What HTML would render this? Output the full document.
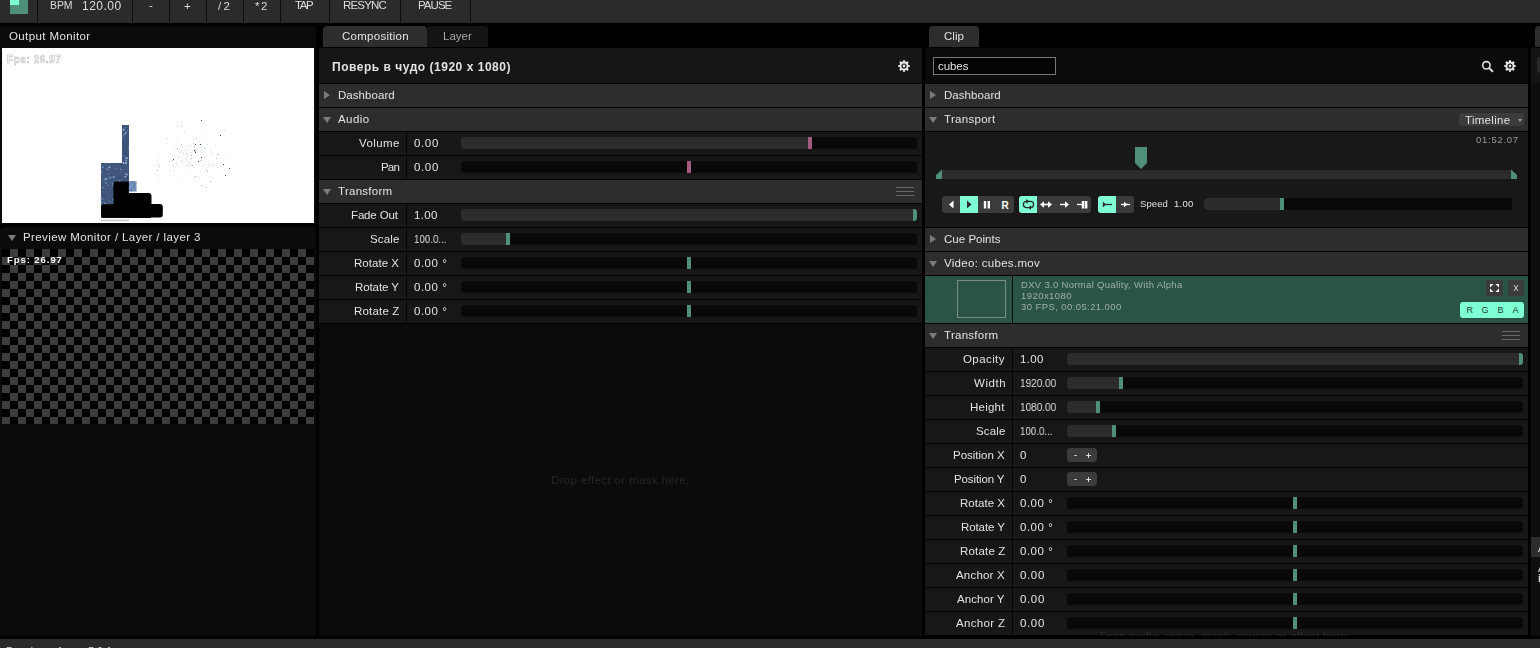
<!DOCTYPE html>
<html><head><meta charset="utf-8">
<style>
*{margin:0;padding:0;box-sizing:border-box}
html,body{width:1540px;height:648px;overflow:hidden;background:#000;font-family:"Liberation Sans",sans-serif;color:#e2e2e2;font-size:11px}
.a{position:absolute}
.t{position:absolute;white-space:nowrap;line-height:1;will-change:transform}
</style></head><body>
<div class="a" style="left:0px;top:0px;width:1540px;height:23px;background:#2b2b2b;"></div>
<div class="a" style="left:10px;top:0px;width:18px;height:14px;background:#4f8f77;"></div>
<div class="a" style="left:10px;top:0px;width:9px;height:5px;background:#7fffd4;"></div>
<div class="a" style="left:37px;top:0px;width:1px;height:23px;background:#0f0f0f;"></div>
<div class="a" style="left:132px;top:0px;width:1px;height:23px;background:#0f0f0f;"></div>
<div class="a" style="left:169px;top:0px;width:1px;height:23px;background:#0f0f0f;"></div>
<div class="a" style="left:206px;top:0px;width:1px;height:23px;background:#0f0f0f;"></div>
<div class="a" style="left:243px;top:0px;width:1px;height:23px;background:#0f0f0f;"></div>
<div class="a" style="left:280px;top:0px;width:1px;height:23px;background:#0f0f0f;"></div>
<div class="a" style="left:329px;top:0px;width:1px;height:23px;background:#0f0f0f;"></div>
<div class="a" style="left:400px;top:0px;width:1px;height:23px;background:#0f0f0f;"></div>
<div class="a" style="left:470px;top:0px;width:1px;height:23px;background:#0f0f0f;"></div>
<div class="a" style="left:0px;top:26px;width:316px;height:197px;background:#0b0b0b;border-radius:4px 4px 0 0"></div>
<div class="a" style="left:2px;top:48px;width:312px;height:175px;background:#fff;"></div>
<svg class="a" style="left:0;top:0" width="320" height="230"><rect x="122" y="125" width="7" height="93" fill="#3f5478"/><rect x="101" y="163" width="28" height="55" fill="#41577c"/><rect x="129" y="181" width="7.5" height="10.5" fill="#6f8db5"/><circle cx="124.3" cy="133.4" r="0.5" fill="#8fb0d8"/><circle cx="127.7" cy="130.3" r="0.5" fill="#7d9ccc"/><circle cx="123.5" cy="129.8" r="1.0" fill="#8fb0d8"/><circle cx="123.7" cy="155.9" r="0.5" fill="#7d9ccc"/><circle cx="122.9" cy="137.5" r="0.5" fill="#7d9ccc"/><circle cx="126.1" cy="127.8" r="0.6" fill="#8fb0d8"/><circle cx="125.9" cy="132.5" r="1.0" fill="#6f8fba"/><circle cx="125.8" cy="157.0" r="0.6" fill="#8fb0d8"/><circle cx="126.1" cy="160.8" r="0.8" fill="#8fb0d8"/><circle cx="125.8" cy="128.5" r="0.5" fill="#7d9ccc"/><circle cx="123.4" cy="163.1" r="1.0" fill="#a9c3e6"/><circle cx="125.3" cy="176.7" r="0.8" fill="#a9c3e6"/><circle cx="123.7" cy="135.1" r="0.6" fill="#8fb0d8"/><circle cx="126.0" cy="154.4" r="0.8" fill="#2f4166"/><circle cx="125.1" cy="159.1" r="0.5" fill="#8fb0d8"/><circle cx="125.6" cy="134.2" r="0.8" fill="#6f8fba"/><circle cx="128.5" cy="148.6" r="0.5" fill="#7d9ccc"/><circle cx="126.0" cy="174.0" r="0.8" fill="#a9c3e6"/><circle cx="126.9" cy="158.3" r="1.0" fill="#8fb0d8"/><circle cx="127.9" cy="177.9" r="1.0" fill="#2f4166"/><circle cx="126.6" cy="128.4" r="0.8" fill="#2f4166"/><circle cx="126.0" cy="163.1" r="1.0" fill="#a9c3e6"/><circle cx="127.0" cy="174.7" r="0.8" fill="#8fb0d8"/><circle cx="128.6" cy="144.9" r="0.5" fill="#5b77a3"/><circle cx="122.4" cy="168.0" r="0.6" fill="#2f4166"/><circle cx="106.2" cy="179.0" r="1.0" fill="#8fb0d8"/><circle cx="104.5" cy="179.5" r="0.8" fill="#6f8fba"/><circle cx="118.2" cy="198.4" r="0.8" fill="#2f4166"/><circle cx="109.7" cy="177.7" r="1.0" fill="#6f8fba"/><circle cx="104.2" cy="170.2" r="0.6" fill="#2f4166"/><circle cx="105.9" cy="182.9" r="0.6" fill="#a9c3e6"/><circle cx="106.9" cy="169.0" r="0.8" fill="#7d9ccc"/><circle cx="112.9" cy="202.1" r="0.5" fill="#5b77a3"/><circle cx="119.9" cy="195.0" r="1.0" fill="#5b77a3"/><circle cx="109.4" cy="167.2" r="1.0" fill="#8fb0d8"/><circle cx="105.0" cy="203.4" r="1.0" fill="#6f8fba"/><circle cx="103.3" cy="187.6" r="0.5" fill="#8fb0d8"/><circle cx="112.9" cy="185.0" r="0.8" fill="#7d9ccc"/><circle cx="101.5" cy="198.8" r="1.0" fill="#6f8fba"/><circle cx="114.3" cy="202.2" r="0.8" fill="#5b77a3"/><circle cx="103.6" cy="197.8" r="1.0" fill="#5b77a3"/><circle cx="111.2" cy="166.5" r="0.5" fill="#2f4166"/><circle cx="108.2" cy="173.9" r="0.6" fill="#7d9ccc"/><circle cx="101.5" cy="202.0" r="0.8" fill="#6f8fba"/><circle cx="115.5" cy="200.5" r="0.8" fill="#2f4166"/><circle cx="119.1" cy="191.5" r="0.8" fill="#7d9ccc"/><circle cx="108.7" cy="169.8" r="0.6" fill="#7d9ccc"/><circle cx="112.4" cy="183.6" r="0.6" fill="#7d9ccc"/><circle cx="118.0" cy="203.4" r="0.6" fill="#6f8fba"/><circle cx="118.2" cy="193.3" r="0.6" fill="#6f8fba"/><circle cx="111.9" cy="177.6" r="0.5" fill="#8fb0d8"/><circle cx="117.6" cy="182.4" r="0.6" fill="#2f4166"/><circle cx="113.7" cy="177.1" r="0.8" fill="#a9c3e6"/><circle cx="102.7" cy="167.2" r="1.0" fill="#6f8fba"/><circle cx="108.1" cy="182.8" r="0.5" fill="#5b77a3"/><circle cx="120.1" cy="177.1" r="0.5" fill="#2f4166"/><circle cx="103.5" cy="178.9" r="0.6" fill="#5b77a3"/><circle cx="119.7" cy="180.8" r="0.8" fill="#8fb0d8"/><circle cx="117.8" cy="202.8" r="1.0" fill="#5b77a3"/><circle cx="109.4" cy="201.8" r="0.6" fill="#6f8fba"/><circle cx="121.9" cy="164.1" r="1.0" fill="#2f4166"/><circle cx="104.1" cy="196.9" r="1.0" fill="#2f4166"/><circle cx="120.7" cy="169.4" r="0.6" fill="#8fb0d8"/><circle cx="101.3" cy="202.8" r="0.5" fill="#7d9ccc"/><circle cx="116.7" cy="168.7" r="0.6" fill="#6f8fba"/><circle cx="101.6" cy="171.7" r="0.6" fill="#7d9ccc"/><circle cx="107.8" cy="185.3" r="0.6" fill="#8fb0d8"/><circle cx="120.1" cy="177.5" r="1.0" fill="#2f4166"/><circle cx="113.3" cy="200.1" r="1.0" fill="#7d9ccc"/><circle cx="103.7" cy="169.2" r="0.5" fill="#5b77a3"/><circle cx="134.4" cy="187.1" r="0.6" fill="#6f8fba"/><circle cx="130.0" cy="187.2" r="0.5" fill="#7d9ccc"/><circle cx="129.4" cy="187.8" r="1.0" fill="#8fb0d8"/><circle cx="135.2" cy="181.6" r="0.6" fill="#a9c3e6"/><circle cx="129.3" cy="182.0" r="1.0" fill="#7d9ccc"/><circle cx="129.2" cy="189.9" r="0.5" fill="#5b77a3"/><circle cx="131.3" cy="190.7" r="0.6" fill="#2f4166"/><circle cx="130.9" cy="186.1" r="1.0" fill="#7d9ccc"/><circle cx="135.6" cy="188.0" r="0.8" fill="#7d9ccc"/><circle cx="135.2" cy="183.0" r="1.0" fill="#6f8fba"/><path d="M116.5,181.5 H128.8 V193 H148.5 Q151.5,193 151.5,196 V204 H160 Q162.8,204 162.8,207 V214.5 Q162.8,217.5 160,217.5 H151 V218 H104 Q101,218 101,215 V207.5 Q101,204.3 104,204.3 H113.4 V184.5 Q113.4,181.5 116.5,181.5 Z" fill="#000"/><rect x="101" y="219.5" width="28" height="1.8" fill="#c8ccd4"/></svg>
<svg class="a" style="left:0;top:0" width="320" height="230"><g><rect x="201" y="120" width="1" height="1" fill="#3a4a6a"/><rect x="195" y="144" width="1" height="1" fill="#3a4a6a"/><rect x="200" y="144" width="1" height="1" fill="#3a4a6a"/><rect x="223" y="164" width="1" height="1" fill="#3a4a6a"/><rect x="229" y="168" width="1" height="1" fill="#3a4a6a"/><rect x="225" y="175" width="1" height="1" fill="#3a4a6a"/><rect x="198" y="161" width="1" height="1" fill="#3a4a6a"/><rect x="220" y="135" width="1" height="1" fill="#3a4a6a"/><rect x="194" y="150" width="1" height="1" fill="#3a4a6a"/><rect x="195" y="152" width="1" height="1" fill="#3a4a6a"/><rect x="201" y="157" width="1" height="1" fill="#3a4a6a"/><rect x="173" y="159" width="1" height="1" fill="#3a4a6a"/><rect x="169" y="161" width="1" height="1" fill="#a0b8d8"/><rect x="158" y="164" width="1" height="1" fill="#f0e0c8"/><rect x="200" y="171" width="1" height="1" fill="#b0e8f0"/><rect x="194" y="151" width="1" height="1" fill="#b8c8e8"/><rect x="206" y="169" width="1" height="1" fill="#c8d8f0"/><rect x="177" y="149" width="1" height="1" fill="#a0b8d8"/><rect x="177" y="142" width="1" height="1" fill="#c8f0e0"/><rect x="167" y="139" width="1" height="1" fill="#e0c8f0"/><rect x="202" y="160" width="1" height="1" fill="#f0e0c8"/><rect x="166" y="143" width="1" height="1" fill="#d0f0f8"/><rect x="159" y="166" width="1" height="1" fill="#9ab0cc"/><rect x="193" y="167" width="1" height="1" fill="#c8d8f0"/><rect x="181" y="144" width="1" height="1" fill="#b8c8e8"/><rect x="173" y="166" width="1" height="1" fill="#e0c8f0"/><rect x="187" y="146" width="1" height="1" fill="#f0e0c8"/><rect x="187" y="156" width="1" height="1" fill="#b0e8f0"/><rect x="193" y="143" width="1" height="1" fill="#b8c8e8"/><rect x="157" y="178" width="1" height="1" fill="#c8d8f0"/><rect x="201" y="185" width="1" height="1" fill="#c8d8f0"/><rect x="186" y="160" width="1" height="1" fill="#f0e0c8"/><rect x="194" y="146" width="1" height="1" fill="#e0c8f0"/><rect x="190" y="159" width="1" height="1" fill="#f0d0e0"/><rect x="192" y="150" width="1" height="1" fill="#f0e0c8"/><rect x="191" y="155" width="1" height="1" fill="#a0b8d8"/><rect x="195" y="149" width="1" height="1" fill="#9ab0cc"/><rect x="200" y="171" width="1" height="1" fill="#c8f0e0"/><rect x="176" y="163" width="1" height="1" fill="#f0d0e0"/><rect x="181" y="161" width="1" height="1" fill="#b8c8e8"/><rect x="224" y="130" width="1" height="1" fill="#b0e8f0"/><rect x="179" y="182" width="1" height="1" fill="#f0e0c8"/><rect x="173" y="146" width="1" height="1" fill="#c8d8f0"/><rect x="204" y="156" width="1" height="1" fill="#b8c8e8"/><rect x="216" y="158" width="1" height="1" fill="#b8c8e8"/><rect x="186" y="160" width="1" height="1" fill="#f0e0c8"/><rect x="180" y="152" width="1" height="1" fill="#b0e8f0"/><rect x="174" y="170" width="1" height="1" fill="#c8f0e0"/><rect x="212" y="153" width="1" height="1" fill="#b0e8f0"/><rect x="203" y="166" width="1" height="1" fill="#c8f0e0"/><rect x="187" y="165" width="1" height="1" fill="#b0e8f0"/><rect x="192" y="165" width="1" height="1" fill="#9ab0cc"/><rect x="206" y="187" width="1" height="1" fill="#a0b8d8"/><rect x="177" y="148" width="1" height="1" fill="#e0c8f0"/><rect x="208" y="166" width="1" height="1" fill="#b8c8e8"/><rect x="194" y="177" width="1" height="1" fill="#b8c8e8"/><rect x="157" y="170" width="1" height="1" fill="#a0b8d8"/><rect x="188" y="164" width="1" height="1" fill="#e0c8f0"/><rect x="206" y="167" width="1" height="1" fill="#b0e8f0"/><rect x="181" y="150" width="1" height="1" fill="#f0e0c8"/><rect x="191" y="152" width="1" height="1" fill="#f0d0e0"/><rect x="186" y="158" width="1" height="1" fill="#c8f0e0"/><rect x="187" y="172" width="1" height="1" fill="#c8f0e0"/><rect x="200" y="160" width="1" height="1" fill="#a0b8d8"/><rect x="218" y="154" width="1" height="1" fill="#9ab0cc"/><rect x="183" y="153" width="1" height="1" fill="#c8d8f0"/><rect x="210" y="150" width="1" height="1" fill="#d0f0f8"/><rect x="177" y="125" width="1" height="1" fill="#c8d8f0"/><rect x="186" y="154" width="1" height="1" fill="#e0c8f0"/><rect x="190" y="145" width="1" height="1" fill="#e0c8f0"/><rect x="212" y="164" width="1" height="1" fill="#c8d8f0"/><rect x="215" y="144" width="1" height="1" fill="#c8f0e0"/><rect x="202" y="129" width="1" height="1" fill="#d0f0f8"/><rect x="209" y="164" width="1" height="1" fill="#e0c8f0"/><rect x="204" y="147" width="1" height="1" fill="#c8d8f0"/><rect x="207" y="144" width="1" height="1" fill="#b0e8f0"/><rect x="182" y="146" width="1" height="1" fill="#c8d8f0"/><rect x="186" y="153" width="1" height="1" fill="#e0c8f0"/><rect x="229" y="155" width="1" height="1" fill="#d0f0f8"/><rect x="169" y="170" width="1" height="1" fill="#b0e8f0"/><rect x="172" y="160" width="1" height="1" fill="#9ab0cc"/><rect x="217" y="167" width="1" height="1" fill="#c8d8f0"/><rect x="189" y="162" width="1" height="1" fill="#c8d8f0"/><rect x="195" y="176" width="1" height="1" fill="#a0b8d8"/><rect x="196" y="138" width="1" height="1" fill="#a0b8d8"/><rect x="191" y="158" width="1" height="1" fill="#b8c8e8"/><rect x="207" y="171" width="1" height="1" fill="#9ab0cc"/><rect x="210" y="181" width="1" height="1" fill="#a0b8d8"/><rect x="178" y="157" width="1" height="1" fill="#f0d0e0"/><rect x="185" y="149" width="1" height="1" fill="#f0d0e0"/><rect x="201" y="136" width="1" height="1" fill="#f0e0c8"/><rect x="204" y="148" width="1" height="1" fill="#b0e8f0"/><rect x="202" y="152" width="1" height="1" fill="#c8f0e0"/><rect x="157" y="157" width="1" height="1" fill="#c8d8f0"/><rect x="181" y="126" width="1" height="1" fill="#b8c8e8"/><rect x="195" y="151" width="1" height="1" fill="#a0b8d8"/><rect x="190" y="165" width="1" height="1" fill="#f0d0e0"/><rect x="175" y="167" width="1" height="1" fill="#d0f0f8"/><rect x="184" y="132" width="1" height="1" fill="#b0e8f0"/><rect x="185" y="158" width="1" height="1" fill="#c8d8f0"/></g></svg>
<div class="t" style="left:7px;top:55px;font-size:10px;font-weight:bold;color:#fff;-webkit-text-stroke:0.5px #b4b4b4;letter-spacing:0.55px">Fps: 26.97</div>

<div class="a" style="left:0px;top:227px;width:316px;height:409px;background:#0b0b0b;border-radius:4px 4px 0 0"></div>
<div class="a" style="left:8px;top:235px;width:0;height:0;border-left:4px solid transparent;border-right:4px solid transparent;border-top:6px solid #7c7c7c"></div>
<div class="a" style="left:2px;top:249px;width:312px;height:175px;background-color:#000;background-image:linear-gradient(45deg,#3c3c3c 25%,transparent 25%,transparent 75%,#3c3c3c 75%),linear-gradient(45deg,#3c3c3c 25%,transparent 25%,transparent 75%,#3c3c3c 75%);background-size:16px 16px;background-position:0 0,8px 8px"></div>
<div class="a" style="left:323px;top:26px;width:104px;height:21px;background:#2d2d2d;border-radius:4px 4px 0 0"></div>
<div class="a" style="left:427px;top:26px;width:61px;height:21px;background:#141414;border-radius:4px 4px 0 0"></div>
<div class="a" style="left:319px;top:48px;width:603px;height:588px;background:#0b0b0b;"></div>
<div class="a" style="left:319px;top:48px;width:603px;height:35px;background:#171615;"></div>
<div class="a" style="left:319px;top:83px;width:603px;height:241px;background:#030303;"></div>
<svg class="a" style="left:0;top:0" width="1540" height="648" viewBox="0 0 1540 648"><polygon points="902.72,61.79 903.41,60.03 904.59,60.03 905.28,61.79 906.07,62.12 907.81,61.36 908.64,62.19 907.88,63.93 908.21,64.72 909.97,65.41 909.97,66.59 908.21,67.28 907.88,68.07 908.64,69.81 907.81,70.64 906.07,69.88 905.28,70.21 904.59,71.97 903.41,71.97 902.72,70.21 901.93,69.88 900.19,70.64 899.36,69.81 900.12,68.07 899.79,67.28 898.03,66.59 898.03,65.41 899.79,64.72 900.12,63.93 899.36,62.19 900.19,61.36 901.93,62.12" fill="#e6e6e6"/><circle cx="904.0" cy="66.0" r="2" fill="none" stroke="#171615" stroke-width="1.2"/></svg>
<div class="a" style="left:319px;top:84px;width:603px;height:23px;background:#2d2d2d;"></div>
<div class="a" style="left:324px;top:91px;width:0;height:0;border-top:4px solid transparent;border-bottom:4px solid transparent;border-left:6px solid #7c7c7c"></div>
<div class="a" style="left:319px;top:108px;width:603px;height:23px;background:#2d2d2d;"></div>
<div class="a" style="left:323px;top:117px;width:0;height:0;border-left:4px solid transparent;border-right:4px solid transparent;border-top:6px solid #7c7c7c"></div>
<div class="a" style="left:319px;top:132px;width:603px;height:23px;background:#181715;"></div>
<div class="a" style="left:406px;top:132px;width:1px;height:23px;background:#050505;"></div>
<div class="a" style="left:461px;top:137px;width:456px;height:12px;background:#090909;border-radius:3px;overflow:hidden"><div class="a" style="left:0;top:0;width:347px;height:12px;background:#2c2c2c"></div><div class="a" style="left:347px;top:0;width:4px;height:12px;background:#a35b80"></div></div>
<div class="a" style="left:319px;top:156px;width:603px;height:23px;background:#181715;"></div>
<div class="a" style="left:406px;top:156px;width:1px;height:23px;background:#050505;"></div>
<div class="a" style="left:461px;top:161px;width:456px;height:12px;background:#090909;border-radius:3px;overflow:hidden"><div class="a" style="left:226px;top:0;width:4px;height:12px;background:#a35b80"></div></div>
<div class="a" style="left:319px;top:180px;width:603px;height:23px;background:#2d2d2d;"></div>
<div class="a" style="left:323px;top:189px;width:0;height:0;border-left:4px solid transparent;border-right:4px solid transparent;border-top:6px solid #7c7c7c"></div>
<div class="a" style="left:896px;top:187px;width:18px;height:1px;background:#6a6a6a;"></div>
<div class="a" style="left:896px;top:191px;width:18px;height:1px;background:#6a6a6a;"></div>
<div class="a" style="left:896px;top:195px;width:18px;height:1px;background:#6a6a6a;"></div>
<div class="a" style="left:319px;top:204px;width:603px;height:23px;background:#181715;"></div>
<div class="a" style="left:406px;top:204px;width:1px;height:23px;background:#050505;"></div>
<div class="a" style="left:461px;top:209px;width:456px;height:12px;background:#090909;border-radius:3px;overflow:hidden"><div class="a" style="left:0;top:0;width:452px;height:12px;background:#2c2c2c"></div><div class="a" style="left:452px;top:0;width:4px;height:12px;background:#4f8f77"></div></div>
<div class="a" style="left:319px;top:228px;width:603px;height:23px;background:#181715;"></div>
<div class="a" style="left:406px;top:228px;width:1px;height:23px;background:#050505;"></div>
<div class="a" style="left:461px;top:233px;width:456px;height:12px;background:#090909;border-radius:3px;overflow:hidden"><div class="a" style="left:0;top:0;width:45px;height:12px;background:#2c2c2c"></div><div class="a" style="left:45px;top:0;width:4px;height:12px;background:#4f8f77"></div></div>
<div class="a" style="left:319px;top:252px;width:603px;height:23px;background:#181715;"></div>
<div class="a" style="left:406px;top:252px;width:1px;height:23px;background:#050505;"></div>
<div class="a" style="left:461px;top:257px;width:456px;height:12px;background:#090909;border-radius:3px;overflow:hidden"><div class="a" style="left:226px;top:0;width:4px;height:12px;background:#4f8f77"></div></div>
<div class="a" style="left:319px;top:276px;width:603px;height:23px;background:#181715;"></div>
<div class="a" style="left:406px;top:276px;width:1px;height:23px;background:#050505;"></div>
<div class="a" style="left:461px;top:281px;width:456px;height:12px;background:#090909;border-radius:3px;overflow:hidden"><div class="a" style="left:226px;top:0;width:4px;height:12px;background:#4f8f77"></div></div>
<div class="a" style="left:319px;top:300px;width:603px;height:23px;background:#181715;"></div>
<div class="a" style="left:406px;top:300px;width:1px;height:23px;background:#050505;"></div>
<div class="a" style="left:461px;top:305px;width:456px;height:12px;background:#090909;border-radius:3px;overflow:hidden"><div class="a" style="left:226px;top:0;width:4px;height:12px;background:#4f8f77"></div></div>
<div class="a" style="left:929px;top:26px;width:50px;height:21px;background:#2d2d2d;border-radius:4px 4px 0 0"></div>
<div class="a" style="left:925px;top:48px;width:603px;height:588px;background:#0b0b0b;"></div>
<div class="a" style="left:925px;top:48px;width:603px;height:35px;background:#0b0b0b;"></div>
<div class="a" style="left:925px;top:83px;width:603px;height:553px;background:#030303;"></div>
<div class="a" style="left:933px;top:57px;width:123px;height:18px;background:#050505;border:1px solid #777"></div>
<svg class="a" style="left:0;top:0" width="1540" height="648"><circle cx="1486.4" cy="65.3" r="3.7" fill="none" stroke="#dcdcdc" stroke-width="1.6"/><line x1="1489.2" y1="68.1" x2="1492.4" y2="71.3" stroke="#dcdcdc" stroke-width="2" stroke-linecap="round"/></svg>
<svg class="a" style="left:0;top:0" width="1540" height="648" viewBox="0 0 1540 648"><polygon points="1508.72,61.79 1509.41,60.03 1510.59,60.03 1511.28,61.79 1512.07,62.12 1513.81,61.36 1514.64,62.19 1513.88,63.93 1514.21,64.72 1515.97,65.41 1515.97,66.59 1514.21,67.28 1513.88,68.07 1514.64,69.81 1513.81,70.64 1512.07,69.88 1511.28,70.21 1510.59,71.97 1509.41,71.97 1508.72,70.21 1507.93,69.88 1506.19,70.64 1505.36,69.81 1506.12,68.07 1505.79,67.28 1504.03,66.59 1504.03,65.41 1505.79,64.72 1506.12,63.93 1505.36,62.19 1506.19,61.36 1507.93,62.12" fill="#e6e6e6"/><circle cx="1510.0" cy="66.0" r="2" fill="none" stroke="#0b0b0b" stroke-width="1.2"/></svg>
<div class="a" style="left:925px;top:84px;width:603px;height:23px;background:#2d2d2d;"></div>
<div class="a" style="left:930px;top:91px;width:0;height:0;border-top:4px solid transparent;border-bottom:4px solid transparent;border-left:6px solid #7c7c7c"></div>
<div class="a" style="left:925px;top:108px;width:603px;height:23px;background:#2d2d2d;"></div>
<div class="a" style="left:929px;top:117px;width:0;height:0;border-left:4px solid transparent;border-right:4px solid transparent;border-top:6px solid #7c7c7c"></div>
<div class="a" style="left:1459px;top:113px;width:65px;height:13px;background:#3c3c3c;border-radius:3px"></div>
<div class="a" style="left:1518px;top:119px;width:0;height:0;border-left:2px solid transparent;border-right:2px solid transparent;border-top:3px solid #999"></div>
<div class="a" style="left:925px;top:132px;width:603px;height:95px;background:#181818;"></div>
<svg class="a" style="left:0;top:0" width="1540" height="648">
<rect x="942" y="170" width="569" height="9" fill="#2c2c2c"/>
<polygon points="936,179 936,175 942,169.5 942,179" fill="#4f8f77"/>
<polygon points="1511,169.5 1517,175 1517,179 1511,179" fill="#4f8f77"/>
<polygon points="1135,147 1147,147 1147,163 1141,169 1135,163" fill="#4f8f77"/>
<rect x="942" y="196" width="72" height="17" rx="3" fill="#3b3b3b"/>
<rect x="960" y="196" width="18" height="17" fill="#7fffd4"/>
<polygon points="953.5,200.5 953.5,208.5 949,204.5" fill="#fff"/>
<polygon points="967,200.5 967,208.5 971.5,204.5" fill="#2a2a2a"/>
<rect x="983.8" y="201" width="2.4" height="7.5" fill="#fff"/>
<rect x="987.6" y="201" width="2.4" height="7.5" fill="#fff"/>
<text x="1001.6" y="208.5" font-family="Liberation Sans" font-weight="bold" font-size="10" fill="#fff">R</text>
<rect x="1019" y="196" width="72" height="17" rx="3" fill="#3b3b3b"/>
<path d="M1022,196 H1037 V213 H1022 A3,3 0 0 1 1019,210 V199 A3,3 0 0 1 1022,196 Z" fill="#7fffd4"/>
<rect x="1023.4" y="201.4" width="10.2" height="6.2" rx="3.1" fill="none" stroke="#2a2a2a" stroke-width="1.25"/>
<polygon points="1026.2,199 1029.2,201.4 1026.2,203.8" fill="#2a2a2a"/>
<polygon points="1031,205.2 1028.2,207.6 1031,210" fill="#2a2a2a"/>
<line x1="1042" y1="204.5" x2="1050" y2="204.5" stroke="#fff" stroke-width="1.6"/>
<polygon points="1040,204.5 1044,201.2 1044,207.8" fill="#fff"/>
<polygon points="1052,204.5 1048,201.2 1048,207.8" fill="#fff"/>
<line x1="1060" y1="204.5" x2="1066" y2="204.5" stroke="#fff" stroke-width="1.4"/>
<polygon points="1069,204.5 1065,201.2 1065,207.8" fill="#fff"/>
<line x1="1077" y1="204.5" x2="1082.5" y2="204.5" stroke="#fff" stroke-width="1.4"/>
<rect x="1081.8" y="201" width="2.6" height="7.5" fill="#fff"/>
<rect x="1085" y="201" width="2.4" height="7.5" fill="#fff"/>
<rect x="1098" y="196" width="36" height="17" rx="3" fill="#3b3b3b"/>
<path d="M1101,196 H1116 V213 H1101 A3,3 0 0 1 1098,210 V199 A3,3 0 0 1 1101,196 Z" fill="#7fffd4"/>
<polygon points="1102.8,201.5 1106,204.5 1102.8,207.5" fill="#2a2a2a"/>
<line x1="1104" y1="204.5" x2="1112" y2="204.5" stroke="#2a2a2a" stroke-width="1.3"/>
<line x1="1121" y1="204.5" x2="1130" y2="204.5" stroke="#fff" stroke-width="1.3"/>
<polygon points="1124,201.8 1127.6,204.5 1124,207.2" fill="#fff"/>
</svg>

<div class="a" style="left:1204px;top:198px;width:308px;height:12px;background:#090909;border-radius:3px;overflow:hidden"><div class="a" style="left:0;top:0;width:76px;height:12px;background:#2c2c2c"></div><div class="a" style="left:76px;top:0;width:4px;height:12px;background:#4f8f77"></div></div>
<div class="a" style="left:925px;top:228px;width:603px;height:23px;background:#2d2d2d;"></div>
<div class="a" style="left:930px;top:235px;width:0;height:0;border-top:4px solid transparent;border-bottom:4px solid transparent;border-left:6px solid #7c7c7c"></div>
<div class="a" style="left:925px;top:252px;width:603px;height:23px;background:#2d2d2d;"></div>
<div class="a" style="left:929px;top:261px;width:0;height:0;border-left:4px solid transparent;border-right:4px solid transparent;border-top:6px solid #7c7c7c"></div>
<div class="a" style="left:925px;top:276px;width:603px;height:47px;background:#2a5445;"></div>
<div class="a" style="left:1012px;top:276px;width:1px;height:47px;background:#0a0a0a;"></div>
<div class="a" style="left:957px;top:280px;width:49px;height:38px;border:1px solid #7d8c84"></div>
<svg class="a" style="left:0;top:0" width="1540" height="648">
<rect x="1486" y="280" width="17" height="16" rx="3" fill="#3b3b3b"/>
<polygon points="1490,284 1493.5,284 1490,287.5" fill="#fff"/>
<polygon points="1499,284 1495.5,284 1499,287.5" fill="#fff"/>
<polygon points="1490,292 1493.5,292 1490,288.5" fill="#fff"/>
<polygon points="1499,292 1495.5,292 1499,288.5" fill="#fff"/>
<rect x="1508" y="280" width="16" height="16" rx="3" fill="#3b3b3b"/>
<line x1="1514" y1="285" x2="1518" y2="291" stroke="#d0d0d0" stroke-width="1"/>
<line x1="1518" y1="285" x2="1514" y2="291" stroke="#d0d0d0" stroke-width="1"/>
<rect x="1460" y="302" width="64" height="16" rx="3" fill="#7fffd4"/>
<text x="1466.5" y="313.2" font-family="Liberation Sans" font-size="9" fill="#1e3a30">R</text>
<text x="1481.5" y="313.2" font-family="Liberation Sans" font-size="9" fill="#1e3a30">G</text>
<text x="1497.5" y="313.2" font-family="Liberation Sans" font-size="9" fill="#1e3a30">B</text>
<text x="1512.5" y="313.2" font-family="Liberation Sans" font-size="9" fill="#1e3a30">A</text>
</svg>

<div class="a" style="left:925px;top:324px;width:603px;height:23px;background:#2d2d2d;"></div>
<div class="a" style="left:929px;top:333px;width:0;height:0;border-left:4px solid transparent;border-right:4px solid transparent;border-top:6px solid #7c7c7c"></div>
<div class="a" style="left:1502px;top:331px;width:18px;height:1px;background:#6a6a6a;"></div>
<div class="a" style="left:1502px;top:335px;width:18px;height:1px;background:#6a6a6a;"></div>
<div class="a" style="left:1502px;top:339px;width:18px;height:1px;background:#6a6a6a;"></div>
<div class="a" style="left:925px;top:348px;width:603px;height:23px;background:#181715;"></div>
<div class="a" style="left:1012px;top:348px;width:1px;height:23px;background:#050505;"></div>
<div class="a" style="left:1067px;top:353px;width:456px;height:12px;background:#090909;border-radius:3px;overflow:hidden"><div class="a" style="left:0;top:0;width:452px;height:12px;background:#2c2c2c"></div><div class="a" style="left:452px;top:0;width:4px;height:12px;background:#4f8f77"></div></div>
<div class="a" style="left:925px;top:372px;width:603px;height:23px;background:#181715;"></div>
<div class="a" style="left:1012px;top:372px;width:1px;height:23px;background:#050505;"></div>
<div class="a" style="left:1067px;top:377px;width:456px;height:12px;background:#090909;border-radius:3px;overflow:hidden"><div class="a" style="left:0;top:0;width:52px;height:12px;background:#2c2c2c"></div><div class="a" style="left:52px;top:0;width:4px;height:12px;background:#4f8f77"></div></div>
<div class="a" style="left:925px;top:396px;width:603px;height:23px;background:#181715;"></div>
<div class="a" style="left:1012px;top:396px;width:1px;height:23px;background:#050505;"></div>
<div class="a" style="left:1067px;top:401px;width:456px;height:12px;background:#090909;border-radius:3px;overflow:hidden"><div class="a" style="left:0;top:0;width:29px;height:12px;background:#2c2c2c"></div><div class="a" style="left:29px;top:0;width:4px;height:12px;background:#4f8f77"></div></div>
<div class="a" style="left:925px;top:420px;width:603px;height:23px;background:#181715;"></div>
<div class="a" style="left:1012px;top:420px;width:1px;height:23px;background:#050505;"></div>
<div class="a" style="left:1067px;top:425px;width:456px;height:12px;background:#090909;border-radius:3px;overflow:hidden"><div class="a" style="left:0;top:0;width:45px;height:12px;background:#2c2c2c"></div><div class="a" style="left:45px;top:0;width:4px;height:12px;background:#4f8f77"></div></div>
<div class="a" style="left:925px;top:444px;width:603px;height:23px;background:#181715;"></div>
<div class="a" style="left:1012px;top:444px;width:1px;height:23px;background:#050505;"></div>
<div class="a" style="left:1067px;top:448px;width:30px;height:14px;background:#3b3b3b;border-radius:3px"></div>
<div class="a" style="left:1074px;top:455px;width:3px;height:1px;background:#bdbdbd;"></div>
<div class="a" style="left:1086px;top:455px;width:5px;height:1px;background:#d8d8d8;"></div>
<div class="a" style="left:1088px;top:453px;width:1px;height:5px;background:#d8d8d8;"></div>
<div class="a" style="left:925px;top:468px;width:603px;height:23px;background:#181715;"></div>
<div class="a" style="left:1012px;top:468px;width:1px;height:23px;background:#050505;"></div>
<div class="a" style="left:1067px;top:472px;width:30px;height:14px;background:#3b3b3b;border-radius:3px"></div>
<div class="a" style="left:1074px;top:479px;width:3px;height:1px;background:#bdbdbd;"></div>
<div class="a" style="left:1086px;top:479px;width:5px;height:1px;background:#d8d8d8;"></div>
<div class="a" style="left:1088px;top:477px;width:1px;height:5px;background:#d8d8d8;"></div>
<div class="a" style="left:925px;top:492px;width:603px;height:23px;background:#181715;"></div>
<div class="a" style="left:1012px;top:492px;width:1px;height:23px;background:#050505;"></div>
<div class="a" style="left:1067px;top:497px;width:456px;height:12px;background:#090909;border-radius:3px;overflow:hidden"><div class="a" style="left:226px;top:0;width:4px;height:12px;background:#4f8f77"></div></div>
<div class="a" style="left:925px;top:516px;width:603px;height:23px;background:#181715;"></div>
<div class="a" style="left:1012px;top:516px;width:1px;height:23px;background:#050505;"></div>
<div class="a" style="left:1067px;top:521px;width:456px;height:12px;background:#090909;border-radius:3px;overflow:hidden"><div class="a" style="left:226px;top:0;width:4px;height:12px;background:#4f8f77"></div></div>
<div class="a" style="left:925px;top:540px;width:603px;height:23px;background:#181715;"></div>
<div class="a" style="left:1012px;top:540px;width:1px;height:23px;background:#050505;"></div>
<div class="a" style="left:1067px;top:545px;width:456px;height:12px;background:#090909;border-radius:3px;overflow:hidden"><div class="a" style="left:226px;top:0;width:4px;height:12px;background:#4f8f77"></div></div>
<div class="a" style="left:925px;top:564px;width:603px;height:23px;background:#181715;"></div>
<div class="a" style="left:1012px;top:564px;width:1px;height:23px;background:#050505;"></div>
<div class="a" style="left:1067px;top:569px;width:456px;height:12px;background:#090909;border-radius:3px;overflow:hidden"><div class="a" style="left:226px;top:0;width:4px;height:12px;background:#4f8f77"></div></div>
<div class="a" style="left:925px;top:588px;width:603px;height:23px;background:#181715;"></div>
<div class="a" style="left:1012px;top:588px;width:1px;height:23px;background:#050505;"></div>
<div class="a" style="left:1067px;top:593px;width:456px;height:12px;background:#090909;border-radius:3px;overflow:hidden"><div class="a" style="left:226px;top:0;width:4px;height:12px;background:#4f8f77"></div></div>
<div class="a" style="left:925px;top:612px;width:603px;height:23px;background:#181715;"></div>
<div class="a" style="left:1012px;top:612px;width:1px;height:23px;background:#050505;"></div>
<div class="a" style="left:1067px;top:617px;width:456px;height:12px;background:#090909;border-radius:3px;overflow:hidden"><div class="a" style="left:226px;top:0;width:4px;height:12px;background:#4f8f77"></div></div>
<div class="a" style="left:1535px;top:26px;width:10px;height:21px;background:#2d2d2d;border-radius:4px 0 0 0"></div>
<div class="a" style="left:1531px;top:48px;width:9px;height:588px;background:#0e0e0e;"></div>
<div class="a" style="left:1531px;top:48px;width:9px;height:35px;background:#141414;"></div>
<div class="a" style="left:1537px;top:57px;width:10px;height:16px;background:#2a2a2a;border-radius:3px"></div>
<div class="a" style="left:1531px;top:537px;width:9px;height:20px;background:#2d2d2d;"></div>
<div class="t" style="left:1537.5px;top:543px;font-size:11px;color:#ddd">A</div><div class="t" style="left:1537.5px;top:563px;font-size:11px;color:#ddd">A</div><div class="t" style="left:1538px;top:573px;font-size:11px;color:#ddd;font-weight:bold">i</div>
<div class="a" style="left:0px;top:639px;width:1540px;height:9px;background:#2b2b2b;"></div>
<div class="t" style="left:49.90px;top:0px;font-size:10.5px;color:#dcdcdc;letter-spacing:-0.103px;">BPM</div>
<div class="t" style="left:81.80px;top:0px;font-size:12px;color:#dcdcdc;letter-spacing:0.474px;">120.00</div>
<div class="t" style="left:149.00px;top:0px;font-size:11.5px;color:#dcdcdc;">-</div>
<div class="t" style="left:184.00px;top:1px;font-size:11.5px;color:#dcdcdc;">+</div>
<div class="t" style="left:217.60px;top:1px;font-size:11.5px;color:#dcdcdc;letter-spacing:2.205px;">/2</div>
<div class="t" style="left:255.00px;top:1px;font-size:11.5px;color:#dcdcdc;letter-spacing:1.525px;">*2</div>
<div class="t" style="left:295.00px;top:0px;font-size:11.5px;color:#dcdcdc;letter-spacing:-1.421px;">TAP</div>
<div class="t" style="left:342.50px;top:0px;font-size:11.5px;color:#dcdcdc;letter-spacing:-0.824px;">RESYNC</div>
<div class="t" style="left:418.00px;top:0px;font-size:11.5px;color:#dcdcdc;letter-spacing:-0.966px;">PAUSE</div>
<div class="t" style="left:9.10px;top:31px;font-size:11.5px;color:#e2e2e2;letter-spacing:0.390px;">Output Monitor</div>
<div class="t" style="left:23.30px;top:232px;font-size:11.5px;color:#e2e2e2;letter-spacing:0.391px;">Preview Monitor / Layer / layer 3</div>
<div class="t" style="left:7.40px;top:255px;font-size:9.5px;color:#fff;font-weight:bold;letter-spacing:0.935px;text-shadow:0 0 1px #000">Fps: 26.97</div>
<div class="t" style="left:341.60px;top:31px;font-size:11.5px;color:#e2e2e2;letter-spacing:0.268px;">Composition</div>
<div class="t" style="left:442.90px;top:31px;font-size:11.5px;color:#a8a8a8;letter-spacing:0.016px;">Layer</div>
<div class="t" style="left:332.20px;top:61px;font-size:12px;color:#e2e2e2;font-weight:bold;letter-spacing:0.521px;">Поверь в чудо (1920 x 1080)</div>
<div class="t" style="left:338.40px;top:90px;font-size:11.5px;color:#e2e2e2;letter-spacing:0.049px;">Dashboard</div>
<div class="t" style="left:338.40px;top:114px;font-size:11.5px;color:#e2e2e2;letter-spacing:0.432px;">Audio</div>
<div class="t" style="left:358.88px;top:138px;font-size:11.5px;color:#e2e2e2;letter-spacing:0.431px;">Volume</div>
<div class="t" style="left:413.50px;top:138px;font-size:11.5px;color:#e2e2e2;letter-spacing:0.632px;">0.00</div>
<div class="t" style="left:380.59px;top:162px;font-size:11.5px;color:#e2e2e2;letter-spacing:-0.829px;">Pan</div>
<div class="t" style="left:413.50px;top:162px;font-size:11.5px;color:#e2e2e2;letter-spacing:0.632px;">0.00</div>
<div class="t" style="left:338.40px;top:186px;font-size:11.5px;color:#e2e2e2;letter-spacing:0.279px;">Transform</div>
<div class="t" style="left:351.29px;top:210px;font-size:11.5px;color:#e2e2e2;letter-spacing:-0.148px;">Fade Out</div>
<div class="t" style="left:413.50px;top:210px;font-size:11.5px;color:#e2e2e2;letter-spacing:0.307px;">1.00</div>
<div class="t" style="left:369.92px;top:234px;font-size:11.5px;color:#e2e2e2;letter-spacing:0.178px;">Scale</div>
<div class="t" style="left:413.50px;top:234px;font-size:11.5px;color:#e2e2e2;transform:scaleX(0.844);transform-origin:0 0;">100.0...</div>
<div class="t" style="left:353.65px;top:258px;font-size:11.5px;color:#e2e2e2;letter-spacing:0.039px;">Rotate X</div>
<div class="t" style="left:413.50px;top:258px;font-size:11.5px;color:#e2e2e2;letter-spacing:0.517px;">0.00 °</div>
<div class="t" style="left:354.63px;top:282px;font-size:11.5px;color:#e2e2e2;letter-spacing:-0.101px;">Rotate Y</div>
<div class="t" style="left:413.50px;top:282px;font-size:11.5px;color:#e2e2e2;letter-spacing:0.517px;">0.00 °</div>
<div class="t" style="left:353.65px;top:306px;font-size:11.5px;color:#e2e2e2;letter-spacing:0.181px;">Rotate Z</div>
<div class="t" style="left:413.50px;top:306px;font-size:11.5px;color:#e2e2e2;letter-spacing:0.517px;">0.00 °</div>
<div class="t" style="left:551.40px;top:475px;font-size:11.5px;color:#262626;letter-spacing:0.361px;">Drop effect or mask here.</div>
<div class="t" style="left:944.30px;top:31px;font-size:11.5px;color:#e2e2e2;letter-spacing:0.028px;">Clip</div>
<div class="t" style="left:938.00px;top:61px;font-size:11.5px;color:#e2e2e2;letter-spacing:-0.059px;">cubes</div>
<div class="t" style="left:944.40px;top:90px;font-size:11.5px;color:#e2e2e2;letter-spacing:0.049px;">Dashboard</div>
<div class="t" style="left:944.40px;top:114px;font-size:11.5px;color:#e2e2e2;letter-spacing:0.298px;">Transport</div>
<div class="t" style="left:1465.20px;top:115px;font-size:11.5px;color:#e2e2e2;letter-spacing:0.295px;">Timeline</div>
<div class="t" style="left:1476.20px;top:135px;font-size:9.5px;color:#9a9a9a;letter-spacing:0.729px;">01:52.07</div>
<div class="t" style="left:1139.80px;top:199px;font-size:9.5px;color:#e2e2e2;letter-spacing:0.078px;">Speed</div>
<div class="t" style="left:1173.50px;top:199px;font-size:9.5px;color:#e2e2e2;letter-spacing:0.265px;">1.00</div>
<div class="t" style="left:944.40px;top:234px;font-size:11.5px;color:#e2e2e2;letter-spacing:0.030px;">Cue Points</div>
<div class="t" style="left:944.40px;top:258px;font-size:11.5px;color:#e2e2e2;letter-spacing:0.303px;">Video: cubes.mov</div>
<div class="t" style="left:1020.50px;top:280px;font-size:9.5px;color:#9fb0a7;letter-spacing:0.316px;">DXV 3.0 Normal Quality, With Alpha</div>
<div class="t" style="left:1020.50px;top:291px;font-size:9.5px;color:#9fb0a7;letter-spacing:0.446px;">1920x1080</div>
<div class="t" style="left:1020.50px;top:302px;font-size:9.5px;color:#9fb0a7;letter-spacing:0.413px;">30 FPS, 00:05:21.000</div>
<div class="t" style="left:944.40px;top:330px;font-size:11.5px;color:#e2e2e2;letter-spacing:0.279px;">Transform</div>
<div class="t" style="left:963.27px;top:354px;font-size:11.5px;color:#e2e2e2;letter-spacing:0.415px;">Opacity</div>
<div class="t" style="left:1019.50px;top:354px;font-size:11.5px;color:#e2e2e2;letter-spacing:0.307px;">1.00</div>
<div class="t" style="left:973.81px;top:378px;font-size:11.5px;color:#e2e2e2;letter-spacing:0.547px;">Width</div>
<div class="t" style="left:1019.50px;top:378px;font-size:11.5px;color:#e2e2e2;transform:scaleX(0.869);transform-origin:0 0;">1920.00</div>
<div class="t" style="left:969.85px;top:402px;font-size:11.5px;color:#e2e2e2;letter-spacing:0.220px;">Height</div>
<div class="t" style="left:1019.50px;top:402px;font-size:11.5px;color:#e2e2e2;transform:scaleX(0.869);transform-origin:0 0;">1080.00</div>
<div class="t" style="left:975.92px;top:426px;font-size:11.5px;color:#e2e2e2;letter-spacing:0.178px;">Scale</div>
<div class="t" style="left:1019.50px;top:426px;font-size:11.5px;color:#e2e2e2;transform:scaleX(0.844);transform-origin:0 0;">100.0...</div>
<div class="t" style="left:953.01px;top:450px;font-size:11.5px;color:#e2e2e2;letter-spacing:-0.013px;">Position X</div>
<div class="t" style="left:1019.50px;top:450px;font-size:11.5px;color:#e2e2e2;">0</div>
<div class="t" style="left:953.98px;top:474px;font-size:11.5px;color:#e2e2e2;letter-spacing:-0.121px;">Position Y</div>
<div class="t" style="left:1019.50px;top:474px;font-size:11.5px;color:#e2e2e2;">0</div>
<div class="t" style="left:959.65px;top:498px;font-size:11.5px;color:#e2e2e2;letter-spacing:0.039px;">Rotate X</div>
<div class="t" style="left:1019.50px;top:498px;font-size:11.5px;color:#e2e2e2;letter-spacing:0.517px;">0.00 °</div>
<div class="t" style="left:960.63px;top:522px;font-size:11.5px;color:#e2e2e2;letter-spacing:-0.101px;">Rotate Y</div>
<div class="t" style="left:1019.50px;top:522px;font-size:11.5px;color:#e2e2e2;letter-spacing:0.517px;">0.00 °</div>
<div class="t" style="left:959.65px;top:546px;font-size:11.5px;color:#e2e2e2;letter-spacing:0.181px;">Rotate Z</div>
<div class="t" style="left:1019.50px;top:546px;font-size:11.5px;color:#e2e2e2;letter-spacing:0.517px;">0.00 °</div>
<div class="t" style="left:955.99px;top:570px;font-size:11.5px;color:#e2e2e2;letter-spacing:0.197px;">Anchor X</div>
<div class="t" style="left:1019.50px;top:570px;font-size:11.5px;color:#e2e2e2;letter-spacing:0.632px;">0.00</div>
<div class="t" style="left:956.97px;top:594px;font-size:11.5px;color:#e2e2e2;letter-spacing:0.057px;">Anchor Y</div>
<div class="t" style="left:1019.50px;top:594px;font-size:11.5px;color:#e2e2e2;letter-spacing:0.632px;">0.00</div>
<div class="t" style="left:955.99px;top:618px;font-size:11.5px;color:#e2e2e2;letter-spacing:0.339px;">Anchor Z</div>
<div class="t" style="left:1019.50px;top:618px;font-size:11.5px;color:#e2e2e2;letter-spacing:0.632px;">0.00</div>
<div class="t" style="left:1099.90px;top:631px;font-size:11.5px;color:#2a2a2a;letter-spacing:0.247px;height:5px;overflow:hidden;">Drop audio, video, mask, source or effect here.</div>
<div class="t" style="left:6.20px;top:647px;font-size:10px;color:#dcdcdc;letter-spacing:0.372px;">Resolume Arena 7.0.1</div>
</body></html>
